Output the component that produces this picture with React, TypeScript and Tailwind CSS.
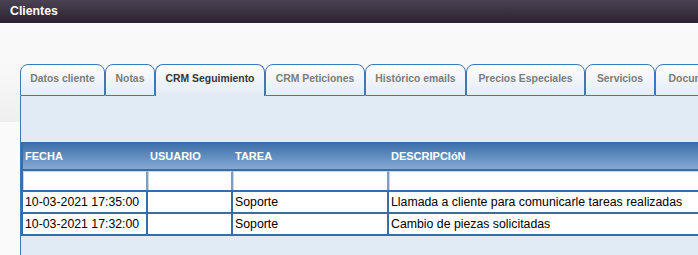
import React from "react";

const tabs = [
  { label: "Datos cliente", w: "w-[85px]" },
  { label: "Notas", w: "w-[50px]" },
  { label: "CRM Seguimiento", w: "w-[110px]", active: true },
  { label: "CRM Peticiones", w: "w-[100px]" },
  { label: "Histórico emails", w: "w-[101px]" },
  { label: "Precios Especiales", w: "w-[119px]" },
  { label: "Servicios", w: "w-[70px]" },
  { label: "Documentos", w: "w-[90px]" },
];

// column widths include the 2px right rule
const cols = ["w-[125px]", "w-[85px]", "w-[156px]", "w-[320px]"];
const heads = ["FECHA", "USUARIO", "TAREA", "DESCRIPCIóN"];

const rows = [
  ["10-03-2021 17:35:00", "", "Soporte", "Llamada a cliente para comunicarle tareas realizadas"],
  ["10-03-2021 17:32:00", "", "Soporte", "Cambio de piezas solicitadas"],
];

function Tab({ label, w, active }: { label: string; w: string; active?: boolean }) {
  return (
    <div
      className={
        "shrink-0 h-[32px] rounded-t-[8px] border border-[#3d78b9] pt-[7px] text-center text-[10.4px] font-bold leading-[13px] " +
        w +
        (active
          ? " border-b-0 bg-[linear-gradient(to_bottom,#fdfdfe,#e1ebf5)] text-[#363636]"
          : " bg-[linear-gradient(to_bottom,#fdfdfe,#e4ecf6)] text-[#7c7c7c]")
      }
    >
      <span className="whitespace-nowrap">{label}</span>
    </div>
  );
}

export default function App() {
  return (
    <div className="h-[255px] w-[698px] overflow-hidden bg-[#fafafa] font-['Liberation_Sans',Arial,sans-serif]">
      <div className="flex h-[23px] items-center bg-[linear-gradient(to_bottom,#4b4353,#2a2230)] pl-[10px] text-[12.3px] font-bold text-white">
        Clientes
      </div>
      <div className="h-[232px] bg-[linear-gradient(to_bottom,#fafafa_0,#f8f8f8_45px,#efefef_99px,#fafafa_99px)] pt-[41px]">
        <div className="flex pl-[20px]">
          {tabs.map((t) => (
            <Tab key={t.label} {...t} />
          ))}
        </div>
        <div className="ml-[20px] h-[160px] border-l border-[#3d78b9] bg-[#e1ebf5] pt-[46px]">
          <div className="w-[700px] border-2 border-[#3b6da5] text-[12.3px]">
            <div className="flex h-[27px] items-center border-b-2 border-[#3b6da5] bg-[linear-gradient(to_bottom,#3f71ab,#84aad4)] text-[11px] font-bold text-white">
              {heads.map((h, i) => (
                <div key={h} className={"shrink-0 px-[2px] " + cols[i]}>
                  {h}
                </div>
              ))}
            </div>
            <div className="flex h-[21px] border-b-2 border-[#3b6da5] bg-white">
              {cols.map((c, i) => (
                <div
                  key={i}
                  className={"shrink-0 border-l border-t border-[#cdd7e3] " + c + (i < 3 ? " border-r-2 border-r-[#7b9ec7]" : "")}
                />
              ))}
            </div>
            {rows.map((r, ri) => (
              <div
                key={ri}
                className={
                  "flex items-center bg-white text-black" +
                  (ri < rows.length - 1 ? " h-[22px] border-b-2 border-[#3b6da5]" : " h-[20px]")
                }
              >
                {r.map((cell, i) => (
                  <div
                    key={i}
                    className={"flex h-full shrink-0 items-center whitespace-nowrap px-[2px] " + cols[i] + (i < 3 ? " border-r-2 border-[#3b6da5]" : "")}
                  >
                    {cell}
                  </div>
                ))}
              </div>
            ))}
          </div>
        </div>
      </div>
    </div>
  );
}
